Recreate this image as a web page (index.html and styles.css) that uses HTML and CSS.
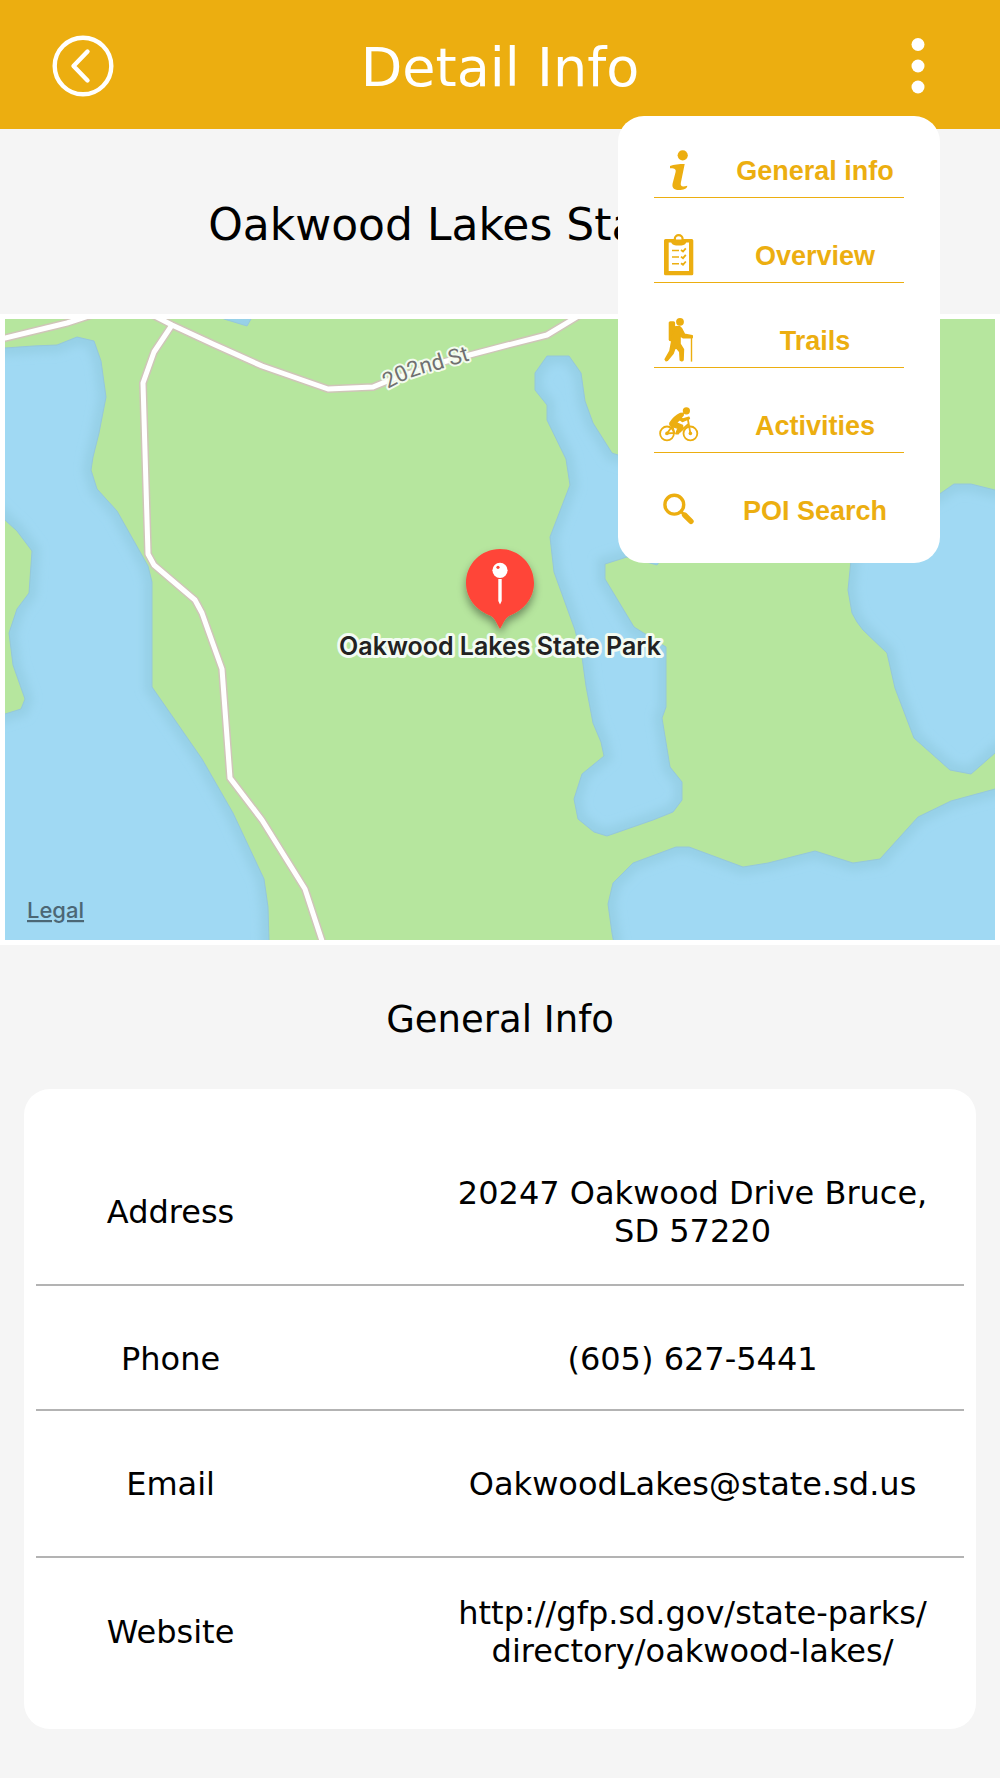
FILE: index.html
```html
<!DOCTYPE html>
<html lang="en">
<head>
    <meta charset="UTF-8">
    <meta name="viewport" content="width=device-width, initial-scale=1.0">
    <title>Detail Info</title>
    <link rel="stylesheet" href="styles.css">
</head>
<body>

    <header class="top-bar">
        <button class="icon-btn" aria-label="Back" onclick="history.back()">
            <svg viewBox="0 0 62 62" fill="none" stroke="#fff" stroke-width="4.4" stroke-linecap="round" stroke-linejoin="round">
                <circle cx="31" cy="31" r="28.3"/>
                <path d="M35.5 16.5 L21.5 31 L35.5 45.5"/>
            </svg>
        </button>
        <h1>Detail Info</h1>
        <button class="icon-btn" aria-label="Menu" onclick="toggleMenu()">
            <svg viewBox="0 0 62 62" fill="#fff">
                <circle cx="32" cy="9.5" r="6.5"/>
                <circle cx="32" cy="31" r="6.5"/>
                <circle cx="32" cy="52" r="6.5"/>
            </svg>
        </button>

        <!-- Drop-down Menu -->
        <nav class="menu" id="menu">
            <a href="#general">
                <svg viewBox="0 0 48 48">
                    <circle cx="27.7" cy="10.3" r="5.1"/>
                    <path d="M15 21 C19 19.4 24 19 29.7 19 L25.8 38 C25.3 41.5 27 42 32.3 40.8 C32.3 43.8 28 45 24 45 C18.5 45 16.8 42.5 17.6 38.5 L20.6 27 C21.3 24 19.5 23 15 23.2 Z"/>
                </svg>
                <span>General info</span>
            </a>
            <a href="#overview">
                <svg viewBox="0 0 48 48">
                    <path fill-rule="evenodd" d="M10.5 9 H36.8 Q38.3 9 38.3 10.5 V43.8 Q38.3 45.3 36.8 45.3 H10.5 Q9 45.3 9 43.8 V10.5 Q9 9 10.5 9 Z M13.7 12.5 V41 H34 V12.5 Z"/>
                    <circle cx="23.7" cy="9" r="3.9" fill="#fff" stroke="#ecae10" stroke-width="2.2"/>
                    <path d="M16 9.6 H31.4 V11 Q31 15.4 26.5 15.4 H21 Q16.4 15.4 16 11 Z"/>
                    <path fill="none" stroke="#ecae10" stroke-width="1.6" d="M17 20.5 H24 M17 27 H24 M17 33.7 H24"/>
                    <path fill="none" stroke="#ecae10" stroke-width="1.8" d="M26 20 L28 21.6 L30.8 18.3 M26 26.6 L28 28.2 L30.8 24.9 M26 33.2 L28 34.8 L30.8 31.5"/>
                </svg>
                <span>Overview</span>
            </a>
            <a href="#trails">
                <svg viewBox="0 0 48 48">
                    <circle cx="25" cy="6.8" r="3.9"/>
                    <rect x="13.7" y="6.2" width="6.4" height="20" rx="1.6"/>
                    <path stroke="#ecae10" stroke-width="1.6" stroke-linejoin="round" d="M19 12 L24.5 11.6 L26.5 13.5 L29.5 19.4 L37.2 20.8 V22.6 L28 22.7 L25 20.5 V29 L28.4 34.5 L28 45 L26.8 45.8 L25.3 45 L24.8 36.8 L20.5 31.8 L18 38.5 L12.4 45.3 L11 45.6 L10.2 44.4 L15 36 L17 25 Z"/>
                    <rect x="35.8" y="22" width="1.4" height="24.6"/>
                </svg>
                <span>Trails</span>
            </a>
            <a href="#activities">
                <svg viewBox="0 0 48 48">
                    <circle cx="31.4" cy="10.8" r="3.6"/>
                    <g fill="none" stroke="#ecae10" stroke-width="1.8">
                        <circle cx="12" cy="33.4" r="6.9"/>
                        <circle cx="35.4" cy="33.4" r="6.9"/>
                        <path d="M12 33.4 L17.5 26 L19.3 33 Z M32.8 19 L35.4 33.4 M33.5 24 L24.5 32"/>
                    </g>
                    <circle cx="12" cy="33.4" r="1.8"/>
                    <circle cx="35.4" cy="33.4" r="1.8"/>
                    <path stroke="#ecae10" stroke-width="1.4" stroke-linejoin="round" d="M15 22.8 Q19 16.5 25.5 13.4 L28.3 13.2 L28.2 15.2 L25.9 17.8 L28 19 L34 17.2 L34.4 18.7 L27.3 21.5 L24.6 19.5 L21.5 22.8 L27.5 25.4 L27.8 27.4 L23.2 33.8 H20.8 L23 28.3 L16.2 26.2 Q14.3 25 15 22.8 Z"/>
                </svg>
                <span>Activities</span>
            </a>
            <a href="#search">
                <svg viewBox="0 0 48 48" class="line-icon">
                    <circle cx="19.3" cy="19.7" r="9.4" stroke-width="3.4"/>
                    <path stroke-width="3" d="M25.5 26 L29 29.5"/>
                    <path stroke-width="5.4" stroke-linecap="round" d="M29.6 30 L36 36.3"/>
                </svg>
                <span>POI Search</span>
            </a>
        </nav>
    </header>

    <h2 class="park-name">Oakwood Lakes State Park</h2>

    <!-- Map -->
    <div class="map">
        <svg viewBox="5 319 990 621" role="img" aria-label="Map of Oakwood Lakes State Park">
            <defs>
                <path id="water" d="M-30 350 L5 348 L33 346 L57 345 L77 337 L94 341 L101 361 L106 397 L99 433 L93 457 L91 470 L97 489 L117 511 L148 566 L152 582 V687 L177 723 L202 759 L233 813 L264 879 L268 907 L270 975 H-30 V725 L5 714 L21 709 L25 699 L13 665 L9 633 L17 609 L29 593 L32 551 L17 531 L5 520 L-30 485 Z
                    M224 319 L247 326 L251 319 L262 295 H190 Z
                    M547 356 H569 L581 373 L585 401 L593 423 L612 453 L650 466 L690 520 L657 565 L643 561 L627 557 L605 564 V579 L634 627 L666 647 V707 L662 718 L670 767 L682 782 V800 L673 812 L653 820 L607 836 L594 832 L578 819 L574 799 L582 774 L604 756 L601 742 L593 723 L586 686 L582 657 L575 630 L554 572 L550 537 L570 485 L566 459 L547 420 V405 L535 390 V373 Z
                    M900 515 L941 493 L954 484 H971 L995 490 L1030 499 V725 L995 753 L971 774 L950 770 L914 738 L895 688 L887 653 L863 630 L857 622 L852 613 L848 590 L851 560 L860 530 Z
                    M1030 780 L995 789 L951 801 L918 817 L880 859 L853 863 L815 851 L768 863 L743 867 L689 847 H676 L633 863 L613 883 L608 904 L612 933 L620 975 H1030 Z"/>
                <path id="roads" d="M-5 341 L5 338 L67 323 L95 314
                    M145 311 L172 325 L213 344 L262 366 L328 389 L373 387 L390 380 L443 362 L500 347 L547 335 L585 312
                    M172 325 L154 352 L143 383 L148 554 L154 565 L195 600 L202 613 L208 630 L222 669 L230 778 L262 820 L305 889 L325 950"/>
                <clipPath id="waterClip"><use href="#water"/></clipPath>
                <filter id="soft"><feGaussianBlur stdDeviation="4"/></filter>
                <filter id="pinShadow" x="-40%" y="-40%" width="180%" height="180%">
                    <feDropShadow dx="0" dy="5" stdDeviation="4" flood-color="#000" flood-opacity="0.4"/>
                </filter>
                <path id="streetLine" d="M388 389 Q409 376 438 370 L480 357"/>
            </defs>

            <rect x="5" y="319" width="990" height="621" fill="#b6e69e"/>
            <use href="#water" fill="#a0d9f3"/>
            <g clip-path="url(#waterClip)">
                <use href="#water" fill="none" stroke="#96d0e7" stroke-width="16" filter="url(#soft)"/>
            </g>
            <use href="#water" fill="none" stroke="#96c8d8" stroke-width="1"/>

            <use href="#roads" fill="none" stroke="#cfc5b8" stroke-width="8" stroke-linejoin="round"/>
            <use href="#roads" fill="none" stroke="#fff" stroke-width="5" stroke-linejoin="round"/>

            <text class="street"><textPath href="#streetLine">202nd St</textPath></text>

            <path filter="url(#pinShadow)" fill="#ff4438" d="M500 549 C481 549 466 564 466 583 C466 598 476 610 491 616 C495 618 497 624 500 629 C503 624 505 618 509 616 C524 610 534 598 534 583 C534 564 519 549 500 549 Z"/>
            <circle cx="500" cy="570.3" r="7.6" fill="#fff"/>
            <circle cx="498" cy="567.3" r="1.6" fill="#ff4438"/>
            <path fill="#fff" d="M498.3 579 H501.7 V601 L500 604.5 L498.3 601 Z"/>
            <text class="place" x="500" y="655">Oakwood Lakes State Park</text>

            <a href="#legal"><text class="legal" x="27" y="918">Legal</text></a>
        </svg>
    </div>

    <h3 class="section-name" id="general">General Info</h3>

    <div class="card">
        <table>
            <tbody>
                <tr>
                    <th scope="row">Address</th>
                    <td>20247 Oakwood Drive Bruce,<br>SD 57220</td>
                </tr>
                <tr class="phone-row">
                    <th scope="row">Phone</th>
                    <td>(605) 627-5441</td>
                </tr>
                <tr>
                    <th scope="row">Email</th>
                    <td><a href="mailto:OakwoodLakes@state.sd.us">OakwoodLakes@state.sd.us</a></td>
                </tr>
                <tr>
                    <th scope="row">Website</th>
                    <td><a href="http://gfp.sd.gov/state-parks/directory/oakwood-lakes/">http://gfp.sd.gov/state-parks/<br>directory/oakwood-lakes/</a></td>
                </tr>
            </tbody>
        </table>
    </div>

    <script>
        function toggleMenu() {
            document.getElementById("menu").classList.toggle("hidden");
        }
    </script>

</body>
</html>
```
FILE: styles.css
```css
* {
    box-sizing: border-box;
}
body {
    font-family: Verdana, "DejaVu Sans", sans-serif;
    margin: 0;
    background-color: #f5f5f5;
    color: #000;
}
h1, h2, h3 {
    margin: 0;
    font-weight: normal;
    text-align: center;
}

/* Top Bar */
.top-bar {
    position: relative;
    display: flex;
    align-items: center;
    justify-content: space-between;
    min-height: 129px;
    padding: 3px 52px 0;
    background-color: #ecae10;
    color: white;
}
.top-bar h1 {
    padding-top: 4px;
    font-size: 54px;
    line-height: 64px;
}
.icon-btn {
    width: 62px;
    height: 62px;
    padding: 0;
    border: none;
    background: none;
    cursor: pointer;
}
.icon-btn svg {
    display: block;
}

/* Drop-down Menu */
.menu {
    position: absolute;
    top: 116px;
    right: 60px;
    z-index: 1;
    display: flex;
    flex-direction: column;
    gap: 28px;
    width: 322px;
    padding: 25px 36px 26px;
    border-radius: 26px;
    background-color: white;
}
.menu a {
    display: grid;
    grid-template-columns: 50px 1fr;
    gap: 22px;
    align-items: center;
    height: 57px;
    border-bottom: 1px solid #ecae10;
    color: #ecae10;
    font-family: "Arial Rounded MT Bold", "Liberation Sans", Arial, sans-serif;
    font-size: 27px;
    font-weight: bold;
    text-align: center;
    text-decoration: none;
    white-space: nowrap;
}
.menu a:last-child {
    height: 56px;
    border-bottom: none;
}
.menu span {
    padding-top: 4px;
}
.menu svg {
    justify-self: center;
    width: 48px;
    height: 48px;
    fill: #ecae10;
}
.menu .line-icon {
    fill: none;
    stroke: #ecae10;
}
.menu.hidden {
    display: none;
}

.park-name {
    padding: 70px 24px 63px;
    font-size: 44px;
    line-height: 52px;
}

/* Map */
.map {
    padding: 5px;
    background-color: white;
}
.map svg {
    display: block;
    width: 100%;
}
.map text {
    font-family: Inter, sans-serif;
    paint-order: stroke;
    stroke-linejoin: round;
}
.map .street {
    font-family: Roboto, sans-serif;
    font-size: 22px;
    fill: #707070;
    stroke: #f3fbee;
    stroke-width: 4px;
}
.place {
    font-size: 25px;
    font-weight: 600;
    text-anchor: middle;
    fill: #222;
    stroke: #f3fbf3;
    stroke-width: 6px;
}
.legal {
    font-size: 22px;
    font-weight: 500;
    fill: #4c6775;
    text-decoration: underline;
}

.section-name {
    padding: 53px 24px 47px;
    font-size: 37px;
    line-height: 44px;
}

/* Info Card */
.card {
    margin: 0 24px 48px;
    padding: 50px 12px 24px;
    border-radius: 26px;
    background-color: white;
}
table {
    width: 100%;
    border-spacing: 0;
    table-layout: fixed;
    font-size: 32px;
    line-height: 38px;
}
tr {
    height: 147px;
}
th, td {
    padding: 0;
    border-bottom: 2px solid #b3b3b3;
    font-weight: normal;
    text-align: center;
}
th {
    width: 29%;
}
td {
    padding-left: 116px;
}
td a {
    color: inherit;
    text-decoration: none;
}
.phone-row {
    height: 125px;
}
.phone-row th, .phone-row td {
    padding-top: 22px;
}
tr:last-child th, tr:last-child td {
    border-bottom: none;
}
```
